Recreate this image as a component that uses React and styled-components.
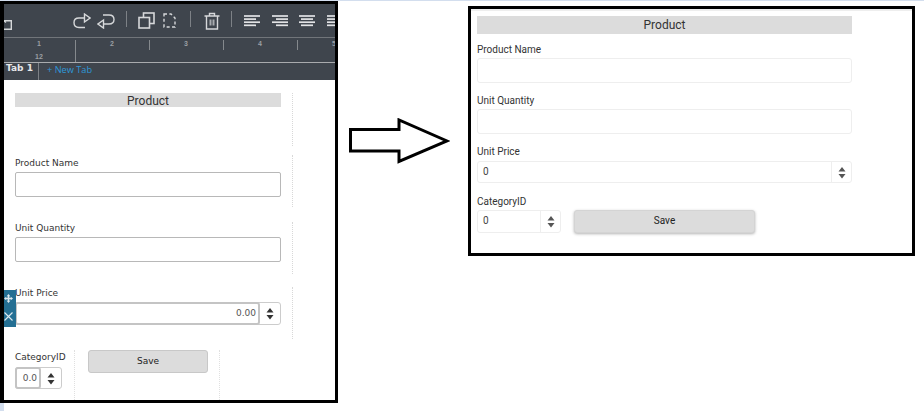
import React from "react";
import styled, { createGlobalStyle } from "styled-components";

const GlobalStyle = createGlobalStyle`
  html, body {
    margin: 0;
    padding: 0;
    background: #fff;
  }
  * {
    box-sizing: border-box;
  }
`;

const Page = styled.div`
  width: 924px;
  height: 411px;
  overflow: hidden;
  display: flex;
  align-items: flex-start;
  border-top: 1px solid #d3deee;
  background: #fff;
`;

const LeftColumn = styled.div`
  width: 338px;
  height: 410px;
  flex: none;
  background: linear-gradient(to right, #d3deee 4px, transparent 4px);
`;

const LeftFrame = styled.div`
  position: relative;
  height: 402px;
  border: solid #000;
  border-width: 3px 3px 3px 4px;
  background: #fff;
  overflow: hidden;
`;

const DarkHead = styled.div`
  background: #3f454d;
  height: 76px;
  overflow: hidden;
`;

const Toolbar = styled.div`
  height: 34px;
  display: flex;
  align-items: center;
  border-bottom: 1px solid #71757a;
  white-space: nowrap;
`;

const ToolIcon = styled.svg`
  flex: none;
  display: block;
  margin-left: ${(p) => p.$gap || 0}px;
  fill: none;
  stroke: ${(p) => p.$stroke || "#d6d8da"};
  stroke-width: 1.4;
`;

const Separator = styled.span`
  flex: none;
  width: 1px;
  height: 16px;
  margin-left: ${(p) => p.$gap}px;
  margin-top: -3px;
  background: #7d8186;
`;

const Ruler = styled.div`
  height: 25px;
  display: flex;
  border-bottom: 1px solid #a9abae;
`;

const RulerCell = styled.div`
  position: relative;
  flex: none;
  width: ${(p) => p.$width}px;
  font: bold 7px "Liberation Sans", sans-serif;
  color: #9b9fa3;
  text-align: center;
  padding-top: 2px;
  padding-right: 2px;

  &::after {
    content: "";
    position: absolute;
    right: 0;
    top: 2px;
    width: 1px;
    height: ${(p) => (p.$tall ? 22 : 10)}px;
    background: #85898d;
  }
`;

const SubTick = styled.div`
  margin-top: 6px;
`;

const TabBar = styled.div`
  height: 17px;
  display: flex;
  font-size: 9px;
  line-height: 11px;
`;

const ActiveTab = styled.div`
  width: 35px;
  padding-left: 2px;
  font-family: "DejaVu Sans", sans-serif;
  font-weight: 700;
  color: #e6e7e9;
  border-right: 1px solid #7d8186;
`;

const NewTab = styled.div`
  padding-left: 8px;
  padding-top: 1px;
  font-family: "Open Sans", sans-serif;
  font-size: 9.2px;
  color: #2e97d8;
`;

const DesignForm = styled.div`
  padding: 13px 0 0 11px;
  font-family: "DejaVu Sans", sans-serif;
  color: #333;
`;

const DesignRow = styled.div`
  width: 278px;
  height: ${(p) => p.$height}px;
  margin-bottom: ${(p) => p.$after}px;
  padding: ${(p) => p.$top || 0}px 11px 0 0;
  border-right: 1px dotted #d8d8d8;
`;

const DesignHeading = styled.div`
  height: 14px;
  background: #dcdcdc;
  font: 12px/16px Roboto, sans-serif;
  color: #333;
  text-align: center;
`;

const DesignLabel = styled.div`
  height: ${(p) => p.$height || 15}px;
  padding-top: ${(p) => p.$top || 0}px;
  font-size: 9px;
  line-height: 12px;
`;

const DesignInput = styled.div`
  height: 25px;
  border: 1px solid #b8b8b8;
  border-radius: 2px;
  background: #fff;
`;

const DesignSpinnerWrap = styled.div`
  display: flex;
  width: ${(p) => p.$width}px;
  height: ${(p) => p.$height}px;
  border: 1px solid #ccc;
  border-radius: 3px;
`;

const DesignNumber = styled.div`
  flex: 1;
  min-width: 0;
  margin: -1px 0 -1px -1px;
  border: 2px solid #c4c4c4;
  border-radius: 3px;
  font-size: 9px;
  line-height: 19px;
  text-align: right;
  padding-right: 2px;
  color: #555;
  overflow: hidden;
`;

const SpinButton = styled.div`
  flex: none;
  width: ${(p) => p.$width}px;
  display: flex;
  align-items: center;
  justify-content: center;
  border-left: ${(p) => (p.$divider ? "1px solid #eee" : "none")};
`;

const BottomRow = styled.div`
  display: flex;
  height: 50px;
`;

const CategoryCell = styled.div`
  width: 60px;
  border-right: 1px dotted #e0e0e0;
`;

const SaveCell = styled.div`
  width: 145px;
  padding-left: 13px;
  border-right: 1px dotted #e0e0e0;
`;

const DesignSave = styled.div`
  width: 120px;
  height: 23px;
  background: #dcdcdc;
  border: 1px solid #c8c8c8;
  border-radius: 3px;
  font-size: 9px;
  line-height: 20px;
  text-align: center;
  color: #222;
`;

const Handle = styled.div`
  position: absolute;
  left: 0;
  top: 286px;
  width: 12px;
  height: 37px;
  padding: 4px 4px 6px 0;
  background: #246f93;
  display: flex;
  flex-direction: column;
  align-items: center;
  justify-content: space-between;
`;

const ArrowBox = styled.div`
  flex: none;
  width: 130px;
  padding: 117px 0 0 11px;
`;

const RightFrame = styled.div`
  flex: none;
  width: 447px;
  height: 250px;
  margin-top: 5px;
  border: 3px solid #000;
  background: #fff;
  box-shadow: inset 0 2px 0 #eee;
  padding: 7px 60px 0 6px;
  font-family: Roboto, sans-serif;
  color: #333;
`;

const Heading = styled.div`
  height: 18px;
  background: #dcdcdc;
  font-size: 12px;
  line-height: 18px;
  text-align: center;
  margin-bottom: 10px;
`;

const Label = styled.div`
  height: ${(p) => p.$height}px;
  font-size: 10px;
  line-height: 12px;
`;

const TextBox = styled.div`
  height: 25px;
  border: 1px solid #eee;
  border-radius: 3px;
  margin-bottom: 12px;
`;

const NumberBox = styled.div`
  display: flex;
  height: ${(p) => p.$height}px;
  width: ${(p) => p.$width || "100%"};
  border: 1px solid #eee;
  border-radius: 3px;
`;

const NumberValue = styled.div`
  flex: 1;
  padding-left: 5px;
  font-size: 10px;
  line-height: 20px;
  color: #444;
`;

const PriceField = styled.div`
  margin-bottom: 13px;
`;

const BottomLine = styled.div`
  display: flex;
  align-items: flex-start;
  gap: 13px;
`;

const SaveButton = styled.div`
  width: 181px;
  height: 23px;
  background: #dcdcdc;
  border: 1px solid #d4d4d4;
  border-radius: 3px;
  box-shadow: 0 1px 3px rgba(0, 0, 0, 0.3);
  font-size: 10px;
  line-height: 20px;
  text-align: center;
  color: #222;
`;

const Triangles = ({ color = "#555" }) => (
  <svg width="8" height="13" viewBox="0 0 8 13">
    <path d="M4 1 L7.5 5.5 H0.5 Z M0.5 8 H7.5 L4 12.5 Z" fill={color} />
  </svg>
);

const AlignIcon = ({ gap, variant }) => {
  const rows = {
    left: [[0, 16], [0, 12], [0, 16], [0, 12]],
    right: [[0, 16], [4, 16], [0, 16], [4, 16]],
    center: [[0, 16], [2, 14], [0, 16], [2, 14]],
  }[variant];
  return (
    <ToolIcon $gap={gap} $stroke="#e2e3e5" width="16" height="12" viewBox="0 0 16 12">
      {rows.map(([a, b], i) => (
        <path key={i} d={`M${a} ${1 + i * 3.1} H${b}`} strokeWidth="1.7" />
      ))}
    </ToolIcon>
  );
};

const ToolbarIcons = () => (
  <Toolbar>
    <ToolIcon width="8" height="10" viewBox="0 0 8 10" style={{ marginTop: 9 }}>
      <path d="M0 .7 H7.3 V9.3 H0" />
      <path d="M0 .7 L2 2.5" />
    </ToolIcon>
    <ToolIcon $gap={61} width="18" height="16" viewBox="0 0 18 16">
      <path d="M12 5 H6 C2.5 5 1 7 1 9.5 C1 12 2.5 14.5 6 14.5 H12" />
      <path d="M11.5 1 L17 5 L11.5 9 Z" />
    </ToolIcon>
    <ToolIcon $gap={6} width="18" height="16" viewBox="0 0 18 16">
      <path d="M6 2 H12 C15.5 2 17 4 17 6.5 C17 9 15.5 11 12 11 H6" />
      <path d="M6.5 7 L1 11 L6.5 15 Z" />
    </ToolIcon>
    <Separator $gap={11} />
    <ToolIcon $gap={11} width="17" height="17" viewBox="0 0 17 17" style={{ strokeWidth: 1.6 }}>
      <rect x="5.5" y="1" width="10.5" height="10.5" />
      <rect x="1" y="5.5" width="10.5" height="10.5" fill="#3f454d" />
    </ToolIcon>
    <ToolIcon $gap={8} width="13" height="15" viewBox="0 0 13 15" style={{ strokeDasharray: "3 2.4" }}>
      <path d="M1 1 H8 L12 5 V14 H1 Z" />
    </ToolIcon>
    <Separator $gap={14} />
    <ToolIcon $gap={13} width="16" height="18" viewBox="0 0 16 18">
      <path d="M.5 4 H15.5 M2.5 4 V17 H13.5 V4 M5.5 4 V1.5 H10.5 V4" />
      <path d="M6.5 7.5 V13.5 M9.5 7.5 V13.5" strokeWidth="2" stroke="#a9acb0" />
    </ToolIcon>
    <Separator $gap={11} />
    <AlignIcon gap={12} variant="left" />
    <AlignIcon gap={12} variant="right" />
    <AlignIcon gap={11} variant="center" />
    <AlignIcon gap={12} variant="left" />
  </Toolbar>
);

const App = () => (
  <>
    <GlobalStyle />
    <Page>
      <LeftColumn>
        <LeftFrame>
          <DarkHead>
            <ToolbarIcons />
            <Ruler>
              <RulerCell $width={72} $tall>
                1
                <SubTick>12</SubTick>
              </RulerCell>
              <RulerCell $width={74}>2</RulerCell>
              <RulerCell $width={74}>3</RulerCell>
              <RulerCell $width={74}>4</RulerCell>
              <RulerCell $width={74}>5</RulerCell>
            </Ruler>
            <TabBar>
              <ActiveTab>Tab 1</ActiveTab>
              <NewTab>+ New Tab</NewTab>
            </TabBar>
          </DarkHead>
          <DesignForm>
            <DesignRow $height={53} $after={9}>
              <DesignHeading>Product</DesignHeading>
            </DesignRow>
            <DesignRow $height={52} $after={15} $top={2}>
              <DesignLabel>Product Name</DesignLabel>
              <DesignInput />
            </DesignRow>
            <DesignRow $height={52} $after={13}>
              <DesignLabel>Unit Quantity</DesignLabel>
              <DesignInput />
            </DesignRow>
            <DesignRow $height={52} $after={11}>
              <DesignLabel>Unit Price</DesignLabel>
              <DesignSpinnerWrap $width={266} $height={23}>
                <DesignNumber>0.00</DesignNumber>
                <SpinButton $width={20}>
                  <Triangles color="#333" />
                </SpinButton>
              </DesignSpinnerWrap>
            </DesignRow>
            <BottomRow>
              <CategoryCell>
                <DesignLabel $height={17} $top={1}>
                  CategoryID
                </DesignLabel>
                <DesignSpinnerWrap $width={47} $height={22}>
                  <DesignNumber>0.0</DesignNumber>
                  <SpinButton $width={20}>
                    <Triangles color="#333" />
                  </SpinButton>
                </DesignSpinnerWrap>
              </CategoryCell>
              <SaveCell>
                <DesignSave>Save</DesignSave>
              </SaveCell>
            </BottomRow>
          </DesignForm>
          <Handle>
            <svg width="9" height="9" viewBox="0 0 9 9">
              <path d="M4.5 0 L6.3 2.2 H5.3 V3.7 H6.8 V2.7 L9 4.5 L6.8 6.3 V5.3 H5.3 V6.8 H6.3 L4.5 9 L2.7 6.8 H3.7 V5.3 H2.2 V6.3 L0 4.5 L2.2 2.7 V3.7 H3.7 V2.2 H2.7 Z" fill="#dce8ee" />
            </svg>
            <svg width="9" height="9" viewBox="0 0 9 9">
              <path d="M.5 .5 L8.5 8.5 M8.5 .5 L.5 8.5" stroke="#dce8ee" strokeWidth="1.1" />
            </svg>
          </Handle>
        </LeftFrame>
      </LeftColumn>
      <ArrowBox>
        <svg width="101" height="46" viewBox="0 0 101 46">
          <path d="M1.5 11.5 H50 V2 L98 23 L50 43.5 V33 H1.5 Z" fill="#fff" stroke="#000" strokeWidth="3" />
        </svg>
      </ArrowBox>
      <RightFrame>
        <Heading>Product</Heading>
        <Label $height={14}>Product Name</Label>
        <TextBox />
        <Label $height={14}>Unit Quantity</Label>
        <TextBox />
        <Label $height={15}>Unit Price</Label>
        <PriceField>
          <NumberBox $height={22}>
            <NumberValue>0</NumberValue>
            <SpinButton $width={20} $divider>
              <Triangles />
            </SpinButton>
          </NumberBox>
        </PriceField>
        <Label $height={14}>CategoryID</Label>
        <BottomLine>
          <NumberBox $height={23} $width="84px">
            <NumberValue>0</NumberValue>
            <SpinButton $width={20} $divider>
              <Triangles />
            </SpinButton>
          </NumberBox>
          <SaveButton>Save</SaveButton>
        </BottomLine>
      </RightFrame>
    </Page>
  </>
);

export default App;
